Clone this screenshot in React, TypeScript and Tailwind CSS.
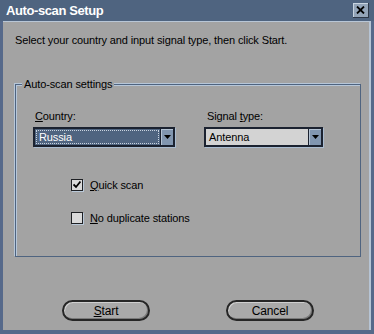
import React from "react";

function Arrow() {
  return (
    <div className="flex h-full w-[13px] items-center justify-center border-l border-[#1b2230] bg-[#8196b0] shadow-[inset_1px_1px_0_#b4c3d4]">
      <svg width="7" height="4" viewBox="0 0 7 4">
        <path d="M0 0h7L3.5 4z" fill="#000" />
      </svg>
    </div>
  );
}

function Select({
  value,
  width,
  focused,
}: {
  value: string;
  width: string;
  focused?: boolean;
}) {
  return (
    <div
      className={`${width} h-[20px] border-[2px] border-[#1b2230] flex shadow-[1px_1px_0_#aabcd0] ${
        focused ? "bg-[#4f6480] text-white" : "bg-[#d3d3d3] text-black"
      }`}
    >
      <div className="flex-1 p-[1px]">
        <div
          className={`h-full flex items-center pl-[2px] ${
            focused ? "border border-dotted border-[#c9d3df]" : ""
          }`}
        >
          {value}
        </div>
      </div>
      <Arrow />
    </div>
  );
}

function Checkbox({ checked, label }: { checked?: boolean; label: React.ReactNode }) {
  return (
    <div className="flex items-center gap-[7px]">
      <div className="w-[12px] h-[12px] border border-[#1e2024] bg-[#dadada] shadow-[1px_1px_0_#b9c8d8] flex items-center justify-center">
        {checked && (
          <svg width="8" height="8" viewBox="0 0 8 8">
            <path d="M0.5 3.5l2.5 2.5 4.5-5.5" stroke="#000" strokeWidth="1.8" fill="none" />
          </svg>
        )}
      </div>
      <span>{label}</span>
    </div>
  );
}

function PillButton({ children }: { children: React.ReactNode }) {
  return (
    <button className="w-[88px] h-[21px] rounded-full border-[2px] border-[#262626] bg-[#a9a9a9] shadow-[inset_1px_1px_0_#cfcfcf,inset_-1px_-1px_0_#7a7a7a] flex items-center justify-center text-black text-[12px]">
      {children}
    </button>
  );
}

export default function App() {
  return (
    <div
      className="w-[374px] h-[334px] bg-[#56698a] flex flex-col text-[11px] tracking-[-0.12px]"
      style={{ fontFamily: '"Liberation Sans", Arial, sans-serif' }}
    >
      {/* Title bar */}
      <div className="h-[21px] bg-[#4f6480] flex items-center justify-between pl-[6px] pr-[5px] shrink-0">
        <span className="text-white font-bold text-[13px] tracking-[-0.4px]">
          Auto-scan Setup
        </span>
        <div className="w-[16px] h-[15px] bg-[#93a4b8] border-r border-b border-[#2c3646] shadow-[inset_1px_1px_0_#c8d4e0] flex items-center justify-center">
          <svg width="9" height="8" viewBox="0 0 9 8">
            <path d="M1 0.5l7 7M8 0.5l-7 7" stroke="#000" strokeWidth="1.8" />
          </svg>
        </div>
      </div>

      {/* Body */}
      <div className="flex-1 ml-[3px] mr-[3px] mb-[4px] bg-[#a3a3a3] border-t border-[#b8c6d6] shadow-[inset_-2px_0_0_#b6c4d4] flex flex-col text-black">
        <p className="mt-[11px] ml-[12px] leading-[14px]">
          Select your country and input signal type, then click Start.
        </p>

        {/* Group box */}
        <div className="relative mt-[37px] ml-[12px] w-[346px] h-[173px] border border-[#4f6480] shadow-[inset_1px_1px_0_#b6c6d8,-1px_-1px_0_#b6c6d8]">
          <span className="absolute -top-[8px] left-[6px] bg-[#a3a3a3] px-[2px] leading-[14px]">
            Auto-scan settings
          </span>

          <div className="flex gap-[29px] mt-[24px] ml-[17px]">
            <div className="flex flex-col gap-[4px]">
              <span className="ml-[2px] leading-[14px]">
                <u>C</u>ountry:
              </span>
              <Select value="Russia" width="w-[142px]" focused />
            </div>
            <div className="flex flex-col gap-[4px]">
              <span className="ml-[3px] leading-[14px]">
                Signal <u>t</u>ype:
              </span>
              <Select value="Antenna" width="w-[119px]" />
            </div>
          </div>

          <div className="flex flex-col gap-[16px] mt-[30px] ml-[55px]">
            <Checkbox checked label={<><u>Q</u>uick scan</>} />
            <Checkbox label={<><u>N</u>o duplicate stations</>} />
          </div>
        </div>

        <div className="flex gap-[76px] mt-[43px] ml-[59px]">
          <PillButton>
            <u>S</u>tart
          </PillButton>
          <PillButton>Cancel</PillButton>
        </div>
      </div>
    </div>
  );
}
